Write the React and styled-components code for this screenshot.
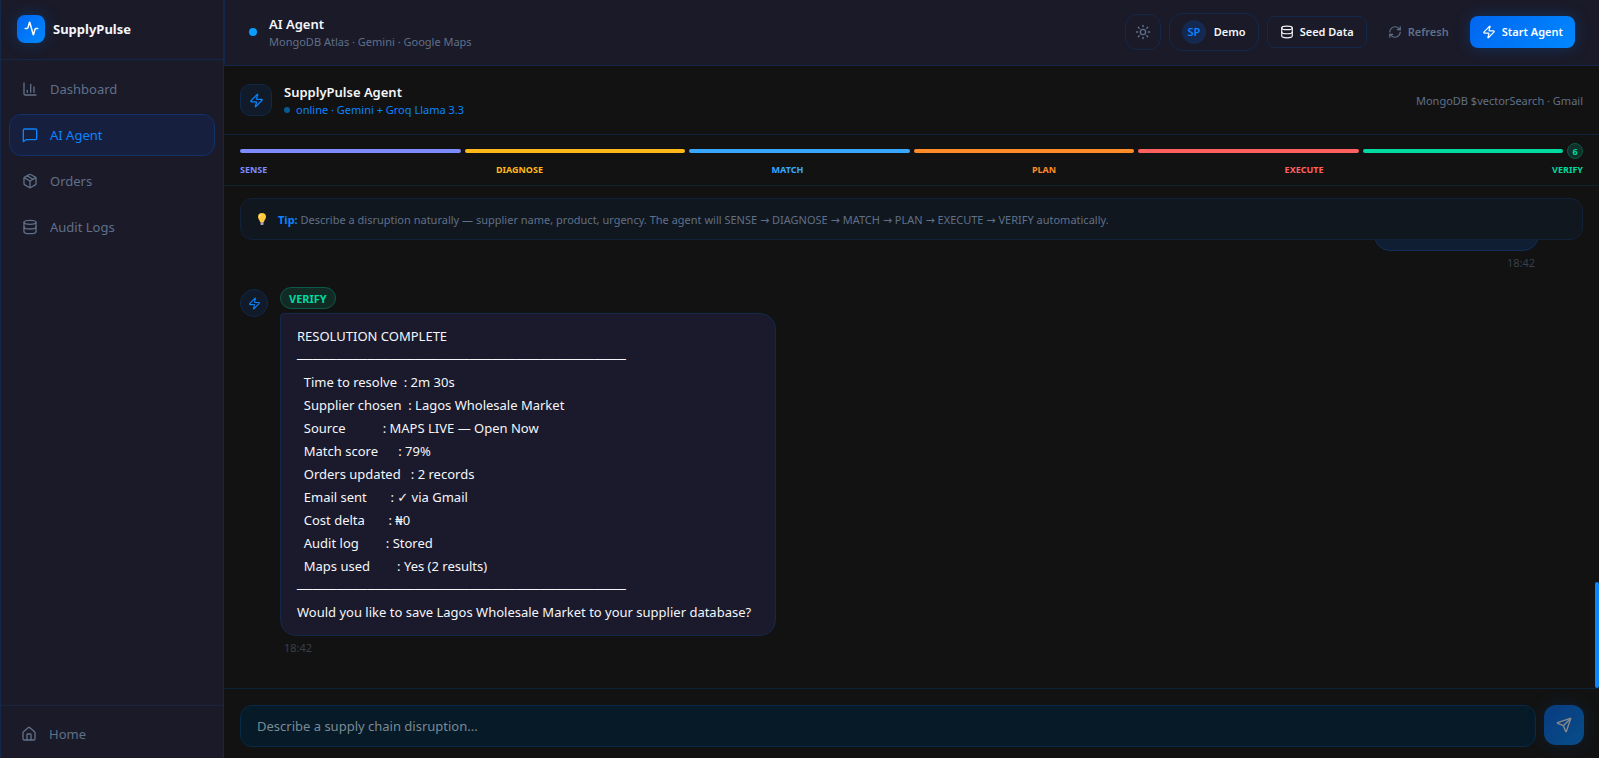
import React, { useState } from "react";
import styled, { createGlobalStyle } from "styled-components";
import {
  Activity,
  ChartColumn,
  Package,
  Database,
  House,
  Sun,
  RefreshCw,
  Zap,
  Send,
} from "lucide-react";

const GlobalStyle = createGlobalStyle`
  * {
    box-sizing: border-box;
  }
  body {
    margin: 0;
    background: #121212;
    color: #f4f6fa;
    font-family: "Noto Sans", "Open Sans", "DejaVu Sans", sans-serif;
    font-size: 13px;
  }
  button,
  input {
    font-family: inherit;
  }
  h1,
  h2,
  p {
    margin: 0;
  }
`;

const Page = styled.div`
  display: flex;
  height: 100vh;
  overflow: hidden;
`;

const Sidebar = styled.aside`
  display: flex;
  flex-direction: column;
  flex: 0 0 224px;
  background: #1a1a28;
  border: solid #14294a;
  border-width: 0 1px;
`;

const Brand = styled.div`
  display: flex;
  align-items: center;
  gap: 8px;
  height: 60px;
  padding: 0 16px 2px;
  border-bottom: 1px solid #14294a;
  font-size: 13px;
  font-weight: 700;
`;

const Logo = styled.span`
  display: flex;
  align-items: center;
  justify-content: center;
  width: 28px;
  height: 28px;
  border-radius: 8px;
  background: linear-gradient(135deg, #0066f0, #0088ff);
  box-shadow: 0 0 16px rgba(0, 128, 255, 0.25);
  color: #fff;
`;

const Nav = styled.nav`
  display: flex;
  flex-direction: column;
  flex: 1;
  gap: 4px;
  padding: 8px;
`;

const NavLink = styled.a`
  display: flex;
  align-items: center;
  gap: 12px;
  height: 42px;
  padding: 0 12px;
  border: 1px solid ${(props) => (props.$active ? "#12306a" : "transparent")};
  border-radius: 12px;
  background: ${(props) => (props.$active ? "#161f3e" : "transparent")};
  color: ${(props) => (props.$active ? "#0a84ff" : "#607088")};
  text-decoration: none;
`;

const SidebarFooter = styled.div`
  padding: 7px 7px 3px;
  border-top: 1px solid #182440;
`;

const Main = styled.main`
  display: flex;
  flex-direction: column;
  flex: 1;
  min-width: 0;
`;

const TopBar = styled.header`
  display: flex;
  align-items: center;
  gap: 8px;
  height: 66px;
  padding: 0 24px 2px;
  background: #1a1a28;
  border: solid #14294a;
  border-width: 0 0 1px 1px;
`;

const Dot = styled.span`
  width: ${(props) => props.$size}px;
  height: ${(props) => props.$size}px;
  border-radius: 50%;
  background: ${(props) => props.$color};
`;

const Heading = styled.div`
  flex: 1;
  padding-top: 2px;
  padding-left: ${(props) => props.$indent}px;
`;

const Title = styled.h1`
  font-size: 13px;
  line-height: 18px;
  font-weight: 600;
`;

const Subtitle = styled.p`
  display: flex;
  align-items: center;
  gap: 6px;
  font-size: 11px;
  line-height: 18px;
  color: ${(props) => (props.$online ? "#0a84ff" : "#607088")};
`;

const Button = styled.button`
  display: flex;
  align-items: center;
  justify-content: center;
  gap: 6px;
  height: 32px;
  padding: 0 12px;
  border: 1px solid #14294a;
  border-radius: 8px;
  background: transparent;
  color: #f4f6fa;
  font-size: 11px;
  font-weight: 600;
  cursor: pointer;
`;

const ThemeButton = styled(Button)`
  width: 36px;
  height: 36px;
  padding: 0;
  border-radius: 12px;
  color: #607088;
`;

const UserButton = styled(Button)`
  height: 38px;
  gap: 8px;
  border-radius: 14px;
`;

const Initials = styled.span`
  display: flex;
  align-items: center;
  justify-content: center;
  width: 24px;
  height: 24px;
  border-radius: 50%;
  background: #152850;
  color: #0a84ff;
`;

const GhostButton = styled(Button)`
  border-color: transparent;
  color: #607088;
`;

const PrimaryButton = styled(Button)`
  border: 0;
  background: linear-gradient(135deg, #0066f0, #0088ff);
  box-shadow: 0 0 16px rgba(0, 128, 255, 0.25);
  color: #fff;
`;

const AgentBar = styled.div`
  display: flex;
  align-items: center;
  height: 69px;
  padding: 0 16px;
  border-bottom: 1px solid #10223a;
`;

const AgentIcon = styled.span`
  display: flex;
  align-items: center;
  justify-content: center;
  flex: none;
  width: ${(props) => (props.$round ? 28 : 32)}px;
  height: ${(props) => (props.$round ? 28 : 32)}px;
  margin-top: ${(props) => (props.$round ? 2 : 0)}px;
  border: 1px solid #10294a;
  border-radius: ${(props) => (props.$round ? "50%" : "10px")};
  background: #101a28;
  color: #0a84ff;
`;

const Stack = styled.span`
  font-size: 11px;
  color: #607088;
`;

const Pipeline = styled.div`
  padding: 8px 16px;
  border-bottom: 1px solid #10222e;
`;

const Bars = styled.div`
  display: flex;
  gap: 4px;
`;

const Step = styled.div`
  display: flex;
  align-items: center;
  gap: 4px;
  flex: 1;
  height: 16px;
`;

const Bar = styled.div`
  flex: 1;
  height: 4px;
  border-radius: 2px;
  background: ${(props) => props.$color};
`;

const StepCount = styled.span`
  display: flex;
  align-items: center;
  justify-content: center;
  width: 16px;
  height: 16px;
  border: 1px solid #0b5a47;
  border-radius: 50%;
  background: #10302a;
  color: #00d9a0;
  font-size: 9px;
  font-weight: 700;
`;

const Labels = styled.div`
  display: flex;
  justify-content: space-between;
  margin-top: 4px;
`;

const Label = styled.span`
  font-size: 9px;
  line-height: 14px;
  font-weight: 700;
  color: ${(props) => props.$color};
`;

const Tip = styled.div`
  display: flex;
  align-items: center;
  gap: 9px;
  height: 42px;
  margin: 12px 16px 0;
  padding: 0 14px;
  border: 1px solid #10213a;
  border-radius: 12px;
  background: #10171e;
  color: #607088;
  font-size: 11px;

  strong {
    color: #0a84ff;
  }
`;

const ChatArea = styled.section`
  position: relative;
  display: flex;
  flex-direction: column;
  justify-content: flex-end;
  flex: 1;
  min-height: 0;
  gap: 16px;
  padding: 0 20px 32px 16px;
  overflow: hidden;
`;

const ScrollThumb = styled.span`
  position: absolute;
  right: 0;
  bottom: 0;
  width: 4px;
  height: 106px;
  border-radius: 2px;
  background: #0a84ff;
`;

const Message = styled.div`
  display: flex;
  gap: 12px;
  flex: none;
`;

const MessageBody = styled.div`
  display: flex;
  flex-direction: column;
  align-items: ${(props) => (props.$user ? "flex-end" : "flex-start")};
  gap: 4px;
  margin: ${(props) => (props.$user ? "0 40px 0 auto" : "0")};
`;

const StageBadge = styled.span`
  display: flex;
  align-items: center;
  height: 22px;
  padding: 0 8px;
  border: 1px solid #0b5a47;
  border-radius: 11px;
  background: #112a24;
  color: #00d9a0;
  font-size: 11px;
  font-weight: 700;
`;

const Bubble = styled.div`
  padding: 11px 24px 11px 16px;
  border: 1px solid #14294a;
  border-radius: 4px 16px 16px 16px;
  background: #1a1a2c;
  line-height: 23px;
  white-space: pre-wrap;
`;

const UserBubble = styled(Bubble)`
  width: 165px;
  height: 46px;
  border-radius: 16px 4px 16px 16px;
  border-color: #10305a;
  background: #101e34;
`;

const Time = styled.time`
  padding: 0 4px;
  font-size: 11px;
  line-height: 16px;
  color: #36404c;
`;

const Composer = styled.form`
  display: flex;
  align-items: flex-start;
  gap: 8px;
  padding: 16px 15px 11px 16px;
  border-top: 1px solid #0c2238;
`;

const MessageInput = styled.input`
  flex: 1;
  height: 42px;
  padding: 0 16px;
  border: 1px solid #062a48;
  border-radius: 12px;
  background: #061a28;
  color: #f4f6fa;
  font-size: 13px;
  outline: none;

  &::placeholder {
    color: #7b8a94;
    opacity: 1;
  }
`;

const SendButton = styled(PrimaryButton)`
  width: 40px;
  height: 40px;
  padding: 0;
  border-radius: 12px;
  opacity: 0.5;
`;

const MessageSquare = ({ size }) => (
  <svg
    width={size}
    height={size}
    viewBox="0 0 24 24"
    fill="none"
    stroke="currentColor"
    strokeWidth="2"
    strokeLinecap="round"
    strokeLinejoin="round"
  >
    <path d="M22 17a2 2 0 0 1-2 2H6l-4 3V5a2 2 0 0 1 2-2h16a2 2 0 0 1 2 2z" />
  </svg>
);

const Bulb = () => (
  <svg width="14" height="14" viewBox="0 0 14 14">
    <path
      d="M7 1a4 4 0 0 0-4 4c0 2 1.700 2.800 2 5h4c.3-2.200 2-3 2-5a4 4 0 0 0-4-4z"
      fill="#ffc83d"
    />
    <path d="M6 3a2 2 0 0 0-1.500 2" stroke="#fff3c4" fill="none" />
    <path d="M5.500 10h3v2.500l-.5.5H6l-.5-.5z" fill="#b4a0b4" />
  </svg>
);

const navItems = [
  { name: "Dashboard", Icon: ChartColumn },
  { name: "AI Agent", Icon: MessageSquare },
  { name: "Orders", Icon: Package },
  { name: "Audit Logs", Icon: Database },
];

const steps = [
  { name: "SENSE", color: "#7c8cff" },
  { name: "DIAGNOSE", color: "#ffb81a" },
  { name: "MATCH", color: "#38a8ff" },
  { name: "PLAN", color: "#ff8c28" },
  { name: "EXECUTE", color: "#ff6060" },
  { name: "VERIFY", color: "#00d9a0" },
];

const rule = "─".repeat(42);

const resolution = [
  ["Time to resolve", "2m 30s"],
  ["Supplier chosen", "Lagos Wholesale Market"],
  ["Source", "MAPS LIVE — Open Now"],
  ["Match score", "79%"],
  ["Orders updated", "2 records"],
  ["Email sent", "✓ via Gmail"],
  ["Cost delta", "₦0"],
  ["Audit log", "Stored"],
  ["Maps used", "Yes (2 results)"],
];

const report = [
  "RESOLUTION COMPLETE",
  rule,
  ...resolution.map(([name, value]) => `  ${name.padEnd(17)}: ${value}`),
  rule,
  "Would you like to save Lagos Wholesale Market to your supplier database?",
].join("\n");

export default function App() {
  const [active, setActive] = useState("AI Agent");
  const [draft, setDraft] = useState("");

  return (
    <Page>
      <GlobalStyle />
      <Sidebar>
        <Brand>
          <Logo>
            <Activity size={15} strokeWidth={2.5} />
          </Logo>
          SupplyPulse
        </Brand>
        <Nav>
          {navItems.map(({ name, Icon }) => (
            <NavLink
              key={name}
              href="#"
              $active={name === active}
              onClick={() => setActive(name)}
            >
              <Icon size={16} />
              {name}
            </NavLink>
          ))}
        </Nav>
        <SidebarFooter>
          <NavLink href="#">
            <House size={16} />
            Home
          </NavLink>
        </SidebarFooter>
      </Sidebar>

      <Main>
        <TopBar>
          <Dot $size={8} $color="#0a9cff" />
          <Heading $indent={4}>
            <Title>AI Agent</Title>
            <Subtitle>MongoDB Atlas · Gemini · Google Maps</Subtitle>
          </Heading>
          <ThemeButton aria-label="Toggle theme">
            <Sun size={16} />
          </ThemeButton>
          <UserButton>
            <Initials>SP</Initials>
            Demo
          </UserButton>
          <Button>
            <Database size={14} />
            Seed Data
          </Button>
          <GhostButton>
            <RefreshCw size={14} />
            Refresh
          </GhostButton>
          <PrimaryButton>
            <Zap size={14} />
            Start Agent
          </PrimaryButton>
        </TopBar>

        <AgentBar>
          <AgentIcon>
            <Zap size={15} />
          </AgentIcon>
          <Heading $indent={12}>
            <Title as="h2">SupplyPulse Agent</Title>
            <Subtitle $online>
              <Dot $size={6} $color="#085a94" />
              online · Gemini + Groq Llama 3.3
            </Subtitle>
          </Heading>
          <Stack>MongoDB $vectorSearch · Gmail</Stack>
        </AgentBar>

        <Pipeline>
          <Bars>
            {steps.map((step, index) => (
              <Step key={step.name}>
                <Bar $color={step.color} />
                {index === steps.length - 1 && (
                  <StepCount>{steps.length}</StepCount>
                )}
              </Step>
            ))}
          </Bars>
          <Labels>
            {steps.map((step) => (
              <Label key={step.name} $color={step.color}>
                {step.name}
              </Label>
            ))}
          </Labels>
        </Pipeline>

        <Tip>
          <Bulb />
          <p>
            <strong>Tip:</strong> Describe a disruption naturally — supplier
            name, product, urgency. The agent will SENSE → DIAGNOSE → MATCH →
            PLAN → EXECUTE → VERIFY automatically.
          </p>
        </Tip>

        <ChatArea>
          <Message>
            <MessageBody $user>
              <UserBubble />
              <Time>18:42</Time>
            </MessageBody>
          </Message>
          <Message>
            <AgentIcon $round>
              <Zap size={13} />
            </AgentIcon>
            <MessageBody>
              <StageBadge>VERIFY</StageBadge>
              <Bubble>{report}</Bubble>
              <Time>18:42</Time>
            </MessageBody>
          </Message>
          <ScrollThumb />
        </ChatArea>

        <Composer onSubmit={(e) => e.preventDefault()}>
          <MessageInput
            aria-label="Message"
            placeholder="Describe a supply chain disruption..."
            value={draft}
            onChange={(e) => setDraft(e.target.value)}
          />
          <SendButton aria-label="Send">
            <Send size={16} />
          </SendButton>
        </Composer>
      </Main>
    </Page>
  );
}
